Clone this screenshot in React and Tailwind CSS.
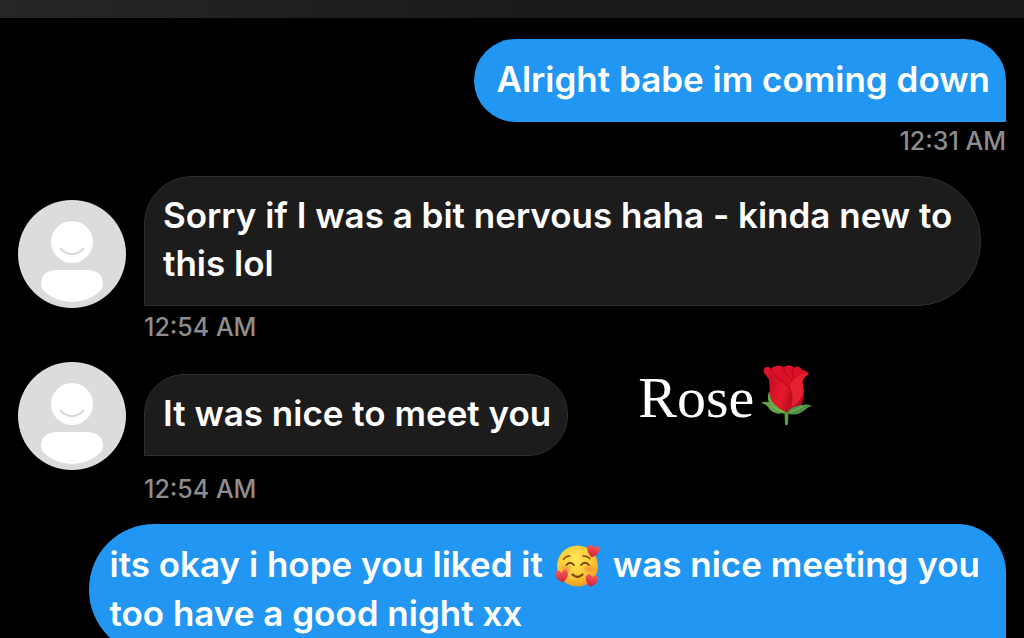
import React from "react";

function Avatar() {
  return (
    <svg viewBox="0 0 108 108" className="size-27 shrink-0" role="img" aria-label="Contact">
      <circle cx="54" cy="54" r="54" fill="#dcdcde" />
      <circle cx="54" cy="42" r="21" fill="#fff" />
      <path d="M42.500 48.500Q54 60 65.500 48.500" fill="none" stroke="#d9d9db" strokeWidth="2" strokeLinecap="round" />
      <path d="M38 70H70Q85 71 85 84Q85 88 82 91Q70 102 54 102Q38 102 26 91Q23 88 23 84Q23 71 38 70Z" fill="#fff" />
    </svg>
  );
}

function Heart({ transform }) {
  return (
    <path
      transform={transform}
      d="M0 6C-5 3-7-1-6-4C-5-7-1-7 0-3C1-7 5-7 6-4C7-1 5 3 0 6Z"
      fill="url(#heart)"
    />
  );
}

function LovingFace() {
  return (
    <svg viewBox="0 0 46 44" className="mx-3 inline-block h-11 w-[46px] align-middle" role="img" aria-label="Smiling face with hearts">
      <defs>
        <radialGradient id="face" cx="45%" cy="35%" r="65%">
          <stop offset="0" stopColor="#ffe65a" />
          <stop offset="0.65" stopColor="#fcc934" />
          <stop offset="1" stopColor="#ed9a24" />
        </radialGradient>
        <radialGradient id="blush">
          <stop offset="0" stopColor="#f4703c" stopOpacity="0.65" />
          <stop offset="1" stopColor="#f4703c" stopOpacity="0" />
        </radialGradient>
        <linearGradient id="heart" x1="0" y1="0" x2="0" y2="1">
          <stop offset="0" stopColor="#f65a5d" />
          <stop offset="1" stopColor="#cf2036" />
        </linearGradient>
      </defs>
      <circle cx="22.500" cy="21" r="20.500" fill="url(#face)" />
      <ellipse cx="11" cy="24" rx="7" ry="5" fill="url(#blush)" />
      <ellipse cx="34" cy="24" rx="7" ry="5" fill="url(#blush)" />
      <g fill="none" stroke="#76430f" strokeLinecap="round">
        <path d="M8.500 14.500Q10.500 11 15 11M28 11Q33 11 35 14" strokeWidth="1.300" />
        <path d="M11.500 20Q15 15.500 19 20M26 20Q30 15.500 34 20" strokeWidth="1.800" />
        <path d="M17.500 29.500Q22.500 34.500 27.500 29.500" strokeWidth="2.200" />
      </g>
      <Heart transform="translate(38 6.500) rotate(12)" />
      <Heart transform="translate(7 31.500) rotate(-8)" />
      <Heart transform="translate(36.500 36) rotate(12)" />
    </svg>
  );
}

function RoseFlower() {
  return (
    <svg viewBox="0 0 54 62" className="h-[62px] w-[54px] shrink-0" role="img" aria-label="Rose">
      <defs>
        <linearGradient id="petal" x1="0" y1="0" x2="1" y2="1">
          <stop offset="0" stopColor="#d8152a" />
          <stop offset="0.5" stopColor="#dc1024" />
          <stop offset="1" stopColor="#a30517" />
        </linearGradient>
        <linearGradient id="petalFront" x1="0" y1="0" x2="1" y2="0.600">
          <stop offset="0" stopColor="#c80a20" />
          <stop offset="0.700" stopColor="#e61a2b" />
          <stop offset="1" stopColor="#c40d20" />
        </linearGradient>
      </defs>
      <path d="M24.500 46H28.500L28 60.500Q26.500 61.500 25 60.500Z" fill="#5fa041" />
      <path d="M9 28C8 39 14 46 24 50L30 50C38 48 42 44 42 36Z" fill="#4f8c38" />
      <path d="M4 5C6 2 9 2 11 5C14 1 20 1 24 3C28 1 32 1 34 4C37 1 41 3 42 6C45 6 48 8 49 10C44 10 42 13 41 16C44 24 45 30 43 36C41 43 36 47 28 48C20 48 14 44 11 36C9 28 10 21 9 16C8 12 2 9 4 5Z" fill="url(#petal)" />
      <path d="M10 6C13 16 25 19 30 28C33 35 30 43 26 48C18 45 13 40 11 33C9 26 12 19 9 14Z" fill="url(#petalFront)" />
      <path d="M49 10C41 8 33 15 29 22Q34 32 30 44C38 40 45 32 43 22Q41 14 49 10Z" fill="#e6202f" />
      <path d="M11 6C14 13 22 16 28 22M24 3C22 8 29 11 32 17M34 4C31 8 32 11 34 14M29 22Q34 32 31 43" fill="none" stroke="#9c0a1a" strokeWidth="0.800" strokeLinecap="round" />
      <path d="M9 28C10 38 17 43 25 48C18 52 11 48 8 43C5 40 4 40 1 39C4 37 7 38 9 38C7 34 8 31 9 28Z" fill="#62a247" />
      <path d="M27 49C31 42 37 42 43 41C47 40 49 41 53 42C48 42 45 47 40 49C35 51 30 51 27 49Z" fill="#4d9145" />
      <path d="M10 38Q15 47 25 48M30 48Q37 46 43 42" fill="none" stroke="#89b956" strokeWidth="1" />
    </svg>
  );
}

function Time({ value, dateTime, className = "" }) {
  return (
    <time dateTime={dateTime} className={"mt-[7px] block text-[25px] leading-6 font-medium text-[#8d8d8f] " + className}>
      {value}
    </time>
  );
}

export default function App() {
  return (
    <div className="flex h-screen flex-col overflow-hidden bg-black font-['Inter','Liberation_Sans',sans-serif] text-white">
      <header className="h-[18px] shrink-0 bg-linear-to-r from-[#262626] via-[#1b1b1b] to-[#1b1b1b]" />
      <main className="flex flex-col gap-[23px] px-[18px] pt-[21px] text-[35px] leading-12 font-semibold">
        <section className="flex flex-col items-end">
          <p className="rounded-[42px] rounded-br-none bg-[#2196f3] px-4 pt-4 pb-[19px] pl-[22px]">
            Alright babe im coming down
          </p>
          <Time value="12:31 AM" dateTime="00:31" />
        </section>

        <section>
          <div className="flex items-end gap-[18px]">
            <Avatar />
            <p className="mb-0.5 rounded-[64px] rounded-tl-[48px] rounded-bl-none border border-[#303030] bg-[#1c1c1d] px-[18px] pt-3.5 pb-[18px] pr-7">
              Sorry if I was a bit nervous haha - kinda new to<br />this lol
            </p>
          </div>
          <Time value="12:54 AM" dateTime="00:54" className="ml-[126px]" />
        </section>

        <section>
          <div className="flex items-start">
            <Avatar />
            <p className="mt-3 ml-[18px] rounded-[40px] rounded-bl-none border border-[#303030] bg-[#1c1c1d] px-[18px] pt-3.5 pb-[18px] pr-4">
              It was nice to meet you
            </p>
            <div className="ml-[70px] flex items-start gap-1.5 pt-0.5">
              <span className="pt-0.5 font-['Liberation_Serif',serif] text-[58px] leading-16 font-normal">Rose</span>
              <RoseFlower />
            </div>
          </div>
          <Time value="12:54 AM" dateTime="00:54" className="ml-[126px]" />
        </section>

        <section className="flex flex-col items-end">
          <p className="rounded-[48px] rounded-l-[65px] rounded-br-none bg-[#2196f3] px-[26px] pt-4 pb-[18px] pl-5">
            its okay i hope you liked it<LovingFace />was nice meeting you<br />too have a good night xx
          </p>
        </section>
      </main>
    </div>
  );
}
